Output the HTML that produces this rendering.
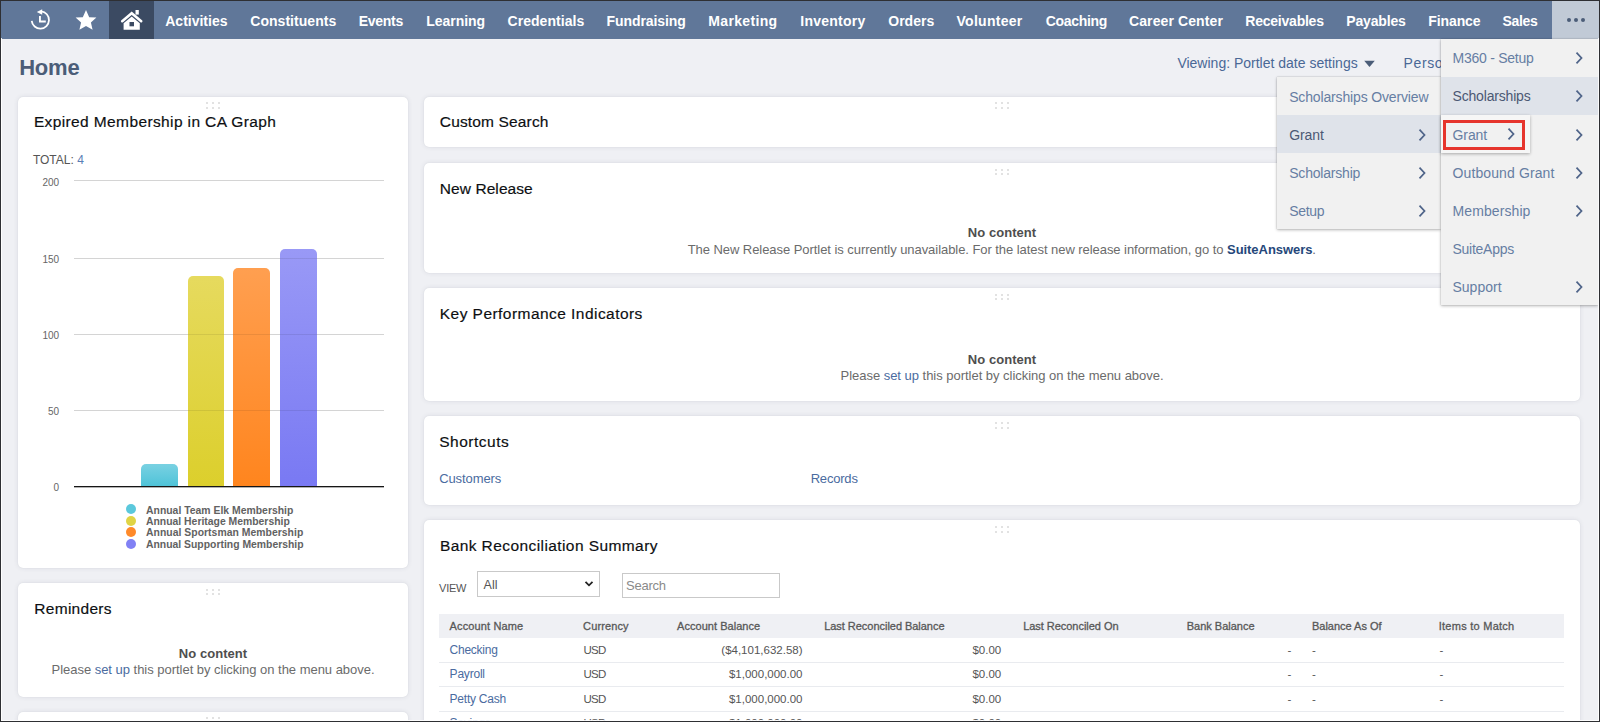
<!DOCTYPE html>
<html><head><meta charset="utf-8">
<style>
*{box-sizing:border-box}
html,body{margin:0;padding:0}
body{width:1600px;height:722px;overflow:hidden;position:relative;background:#eff0f4;font-family:"Liberation Sans",sans-serif}
.t{position:absolute;white-space:nowrap;line-height:1}
.tt{-webkit-text-stroke:0.18px currentColor}
.r{position:absolute}
.dot{position:absolute;width:2px;height:2px;background:#e2e2e2}
.pt{position:absolute;background:#fff;border-radius:5px;box-shadow:0 0 5px rgba(50,60,80,.10),0 0 1px rgba(50,60,80,.12)}
#frame{position:absolute;left:0;top:0;width:1600px;height:722px;border:1px solid #2e2f33;z-index:100;pointer-events:none}
#fr2{position:absolute;left:1px;top:38px;width:1598px;height:683px;border-left:1px solid rgba(255,255,255,.9);border-right:1px solid rgba(255,255,255,.9);border-bottom:1px solid rgba(255,255,255,.9);z-index:99;pointer-events:none}
.menu{position:absolute;background:#f1f1f1;box-shadow:0 1px 3px rgba(0,0,0,.28),0 0 1px rgba(0,0,0,.25)}
</style></head><body>

<div class="r" style="left:0.00px;top:0.00px;width:1600.00px;height:38.50px;background:#607799"></div>
<svg class="r" style="left:25px;top:5px" width="32" height="32" viewBox="25 5 32 32">
<path d="M31.72 20.9 A8.65 8.65 0 1 0 41.2 11.35" fill="none" stroke="#fff" stroke-width="1.8"/>
<path d="M36.8 12.0 L42.2 9.3 L42.2 14.7 Z" fill="#fff"/>
<path d="M39.95 16.0 L39.95 21.5 L45.8 21.5" fill="none" stroke="#fff" stroke-width="1.9"/>
</svg>
<svg class="r" style="left:70px;top:5px" width="32" height="30" viewBox="70 5 32 30">
<path d="M86 10 L89.2 17.2 L96.4 17.6 L90.9 22.6 L92.6 29.8 L86 25.9 L79.4 29.8 L81.1 22.6 L75.6 17.6 L82.8 17.2 Z" fill="#fff"/>
</svg>
<div class="r" style="left:108.50px;top:0.00px;width:45.50px;height:38.50px;background:#3b4a62"></div>
<svg class="r" style="left:115px;top:5px" width="34" height="30" viewBox="115 5 34 30">
<path d="M123.6 23.2 L131.7 16.4 L139.8 23.2 L139.8 29.8 L123.6 29.8 Z" fill="#fff"/>
<rect x="129.5" y="22" width="4.5" height="4.3" fill="#3b4a62"/>
<path d="M122.2 21.2 L131.7 13.3 L141.2 21.2" fill="none" stroke="#fff" stroke-width="2.6" stroke-linecap="round" stroke-linejoin="miter"/>
<rect x="135.5" y="10" width="3.3" height="4.6" fill="#fff"/>
</svg>
<div class="t" style="left:165.25px;top:13.80px;font-size:14px;color:#fff;font-weight:bold;">Activities</div>
<div class="t" style="left:250.25px;top:13.80px;font-size:14px;color:#fff;font-weight:bold;letter-spacing:0.038px;">Constituents</div>
<div class="t" style="left:358.75px;top:13.80px;font-size:14px;color:#fff;font-weight:bold;letter-spacing:-0.276px;">Events</div>
<div class="t" style="left:426.25px;top:13.80px;font-size:14px;color:#fff;font-weight:bold;letter-spacing:-0.045px;">Learning</div>
<div class="t" style="left:507.50px;top:13.80px;font-size:14px;color:#fff;font-weight:bold;letter-spacing:0.046px;">Credentials</div>
<div class="t" style="left:606.50px;top:13.80px;font-size:14px;color:#fff;font-weight:bold;letter-spacing:-0.078px;">Fundraising</div>
<div class="t" style="left:708.25px;top:13.80px;font-size:14px;color:#fff;font-weight:bold;letter-spacing:0.348px;">Marketing</div>
<div class="t" style="left:800.25px;top:13.80px;font-size:14px;color:#fff;font-weight:bold;letter-spacing:0.249px;">Inventory</div>
<div class="t" style="left:888.25px;top:13.80px;font-size:14px;color:#fff;font-weight:bold;letter-spacing:0.015px;">Orders</div>
<div class="t" style="left:956.50px;top:13.80px;font-size:14px;color:#fff;font-weight:bold;letter-spacing:0.275px;">Volunteer</div>
<div class="t" style="left:1045.75px;top:13.80px;font-size:14px;color:#fff;font-weight:bold;letter-spacing:-0.316px;">Coaching</div>
<div class="t" style="left:1129.00px;top:13.80px;font-size:14px;color:#fff;font-weight:bold;letter-spacing:0.108px;">Career Center</div>
<div class="t" style="left:1245.25px;top:13.80px;font-size:14px;color:#fff;font-weight:bold;letter-spacing:-0.222px;">Receivables</div>
<div class="t" style="left:1346.25px;top:13.80px;font-size:14px;color:#fff;font-weight:bold;letter-spacing:-0.151px;">Payables</div>
<div class="t" style="left:1428.25px;top:13.80px;font-size:14px;color:#fff;font-weight:bold;letter-spacing:-0.093px;">Finance</div>
<div class="t" style="left:1502.50px;top:13.80px;font-size:14px;color:#fff;font-weight:bold;letter-spacing:-0.317px;">Sales</div>
<div class="r" style="left:1552.00px;top:1.00px;width:47.00px;height:37.50px;background:#c1cad6"></div>
<i class="r" style="left:1567px;top:18px;width:4px;height:4px;border-radius:2px;background:#4b5d78"></i>
<i class="r" style="left:1574px;top:18px;width:4px;height:4px;border-radius:2px;background:#4b5d78"></i>
<i class="r" style="left:1580.5px;top:18px;width:4px;height:4px;border-radius:2px;background:#4b5d78"></i>
<div class="t" style="left:19.20px;top:56.90px;font-size:22px;color:#4b5d78;font-weight:bold;letter-spacing:-0.231px;">Home</div>
<div class="t" style="left:1177.40px;top:55.75px;font-size:14px;color:#4a6896;">Viewing: Portlet date settings</div>
<svg class="r" style="left:1363px;top:60px" width="13" height="8"><path d="M1.2 0.8 L11.8 0.8 L6.5 6.9 Z" fill="#4b5d78"/></svg>
<div class="t" style="left:1403.60px;top:55.75px;font-size:14px;color:#4a6896;letter-spacing:0.623px;">Personalize</div>
<div class="pt" style="left:18px;top:97px;width:390.4px;height:471px"></div>
<i class="dot" style="left:206.40px;top:102.30px"></i>
<i class="dot" style="left:206.40px;top:106.70px"></i>
<i class="dot" style="left:212.00px;top:102.30px"></i>
<i class="dot" style="left:212.00px;top:106.70px"></i>
<i class="dot" style="left:217.90px;top:102.30px"></i>
<i class="dot" style="left:217.90px;top:106.70px"></i>
<div class="t tt" style="left:33.90px;top:114.10px;font-size:15.5px;color:#0d0f12;letter-spacing:0.381px;">Expired Membership in CA Graph</div>
<div class="t" style="left:32.90px;top:154.10px;font-size:12px;color:#555;">TOTAL: </div>
<div class="t" style="left:77.13px;top:154.10px;font-size:12px;color:#5a7db5;">4</div>
<div class="r" style="left:74.00px;top:180.10px;width:310.00px;height:1.00px;background:#d4d4d4"></div>
<div class="t" style="left:42.42px;top:178.00px;font-size:10px;color:#666;">200</div>
<div class="r" style="left:74.00px;top:257.80px;width:310.00px;height:1.00px;background:#d4d4d4"></div>
<div class="t" style="left:42.42px;top:254.60px;font-size:10px;color:#666;">150</div>
<div class="r" style="left:74.00px;top:334.00px;width:310.00px;height:1.00px;background:#d4d4d4"></div>
<div class="t" style="left:42.42px;top:330.80px;font-size:10px;color:#666;">100</div>
<div class="r" style="left:74.00px;top:409.80px;width:310.00px;height:1.00px;background:#d4d4d4"></div>
<div class="t" style="left:47.98px;top:406.60px;font-size:10px;color:#666;">50</div>
<div class="t" style="left:53.54px;top:482.80px;font-size:10px;color:#666;">0</div>
<div class="r" style="left:141.00px;top:464.10px;width:36.90px;height:21.90px;background:linear-gradient(#79d1e2,#4fc3d8);border-radius:5px 5px 0 0"></div>
<div class="r" style="left:187.50px;top:275.60px;width:36.90px;height:210.40px;background:linear-gradient(#e6da5e,#dccf2c);border-radius:5px 5px 0 0"></div>
<div class="r" style="left:233.10px;top:268.10px;width:36.90px;height:217.90px;background:linear-gradient(#ff9f50,#ff851e);border-radius:5px 5px 0 0"></div>
<div class="r" style="left:280.00px;top:249.00px;width:37.10px;height:237.00px;background:linear-gradient(#9999f6,#7979f3);border-radius:5px 5px 0 0"></div>
<div class="r" style="left:74.00px;top:486.00px;width:310.00px;height:1.00px;background:#161616"></div>
<div class="r" style="left:74.00px;top:487.00px;width:310.00px;height:1.00px;background:rgba(0,0,0,.3)"></div>
<div class="r" style="left:280.00px;top:257.80px;width:37.10px;height:1.00px;background:rgba(0,0,0,.08)"></div>
<div class="r" style="left:187.50px;top:334.00px;width:36.90px;height:1.00px;background:rgba(0,0,0,.08)"></div>
<div class="r" style="left:233.10px;top:334.00px;width:36.90px;height:1.00px;background:rgba(0,0,0,.08)"></div>
<div class="r" style="left:280.00px;top:334.00px;width:37.10px;height:1.00px;background:rgba(0,0,0,.08)"></div>
<div class="r" style="left:187.50px;top:409.80px;width:36.90px;height:1.00px;background:rgba(0,0,0,.08)"></div>
<div class="r" style="left:233.10px;top:409.80px;width:36.90px;height:1.00px;background:rgba(0,0,0,.08)"></div>
<div class="r" style="left:280.00px;top:409.80px;width:37.10px;height:1.00px;background:rgba(0,0,0,.08)"></div>
<i class="r" style="left:126px;top:504.25px;width:10px;height:10px;border-radius:5px;background:#5bc8dc"></i>
<div class="t" style="left:146.00px;top:505.60px;font-size:10.4px;color:#626262;font-weight:bold;letter-spacing:0.013px;">Annual Team Elk Membership</div>
<i class="r" style="left:126px;top:515.70px;width:10px;height:10px;border-radius:5px;background:#e0d444"></i>
<div class="t" style="left:146.00px;top:516.90px;font-size:10.4px;color:#626262;font-weight:bold;">Annual Heritage Membership</div>
<i class="r" style="left:126px;top:527.15px;width:10px;height:10px;border-radius:5px;background:#ff8a2a"></i>
<div class="t" style="left:146.00px;top:528.20px;font-size:10.4px;color:#626262;font-weight:bold;letter-spacing:0.030px;">Annual Sportsman Membership</div>
<i class="r" style="left:126px;top:538.60px;width:10px;height:10px;border-radius:5px;background:#8181f4"></i>
<div class="t" style="left:146.00px;top:539.50px;font-size:10.4px;color:#626262;font-weight:bold;">Annual Supporting Membership</div>
<div class="pt" style="left:18px;top:583px;width:390.4px;height:113.5px"></div>
<i class="dot" style="left:206.40px;top:588.80px"></i>
<i class="dot" style="left:206.40px;top:593.20px"></i>
<i class="dot" style="left:212.00px;top:588.80px"></i>
<i class="dot" style="left:212.00px;top:593.20px"></i>
<i class="dot" style="left:217.90px;top:588.80px"></i>
<i class="dot" style="left:217.90px;top:593.20px"></i>
<div class="t tt" style="left:34.30px;top:600.80px;font-size:15.5px;color:#0d0f12;letter-spacing:0.285px;">Reminders</div>
<div class="t" style="left:178.85px;top:646.50px;font-size:13px;color:#4e4e4e;font-weight:bold;letter-spacing:0.042px;">No content</div>
<div class="t" style="left:51.50px;top:663.20px;font-size:13px;color:#6b6b6b;letter-spacing:-0.025px;">Please <span style="color:#4a6ba0">set up</span> this portlet by clicking on the menu above.</div>
<div class="pt" style="left:18px;top:712px;width:390.4px;height:48px"></div>
<i class="dot" style="left:206.40px;top:717.30px"></i>
<i class="dot" style="left:206.40px;top:721.70px"></i>
<i class="dot" style="left:212.00px;top:717.30px"></i>
<i class="dot" style="left:212.00px;top:721.70px"></i>
<i class="dot" style="left:217.90px;top:717.30px"></i>
<i class="dot" style="left:217.90px;top:721.70px"></i>
<div class="pt" style="left:423.6px;top:97px;width:1156.4px;height:50.19999999999999px"></div>
<i class="dot" style="left:995.40px;top:102.30px"></i>
<i class="dot" style="left:995.40px;top:106.70px"></i>
<i class="dot" style="left:1001.00px;top:102.30px"></i>
<i class="dot" style="left:1001.00px;top:106.70px"></i>
<i class="dot" style="left:1006.90px;top:102.30px"></i>
<i class="dot" style="left:1006.90px;top:106.70px"></i>
<div class="t tt" style="left:439.80px;top:114.40px;font-size:15.5px;color:#0d0f12;letter-spacing:0.153px;">Custom Search</div>
<div class="pt" style="left:423.6px;top:162.7px;width:1156.4px;height:109.90000000000003px"></div>
<i class="dot" style="left:995.40px;top:168.80px"></i>
<i class="dot" style="left:995.40px;top:173.20px"></i>
<i class="dot" style="left:1001.00px;top:168.80px"></i>
<i class="dot" style="left:1001.00px;top:173.20px"></i>
<i class="dot" style="left:1006.90px;top:168.80px"></i>
<i class="dot" style="left:1006.90px;top:173.20px"></i>
<div class="t tt" style="left:439.80px;top:180.80px;font-size:15.5px;color:#0d0f12;letter-spacing:0.075px;">New Release</div>
<div class="t" style="left:967.75px;top:225.90px;font-size:13px;color:#4e4e4e;font-weight:bold;letter-spacing:0.062px;">No content</div>
<div class="t" style="left:687.70px;top:242.75px;font-size:13px;color:#6b6b6b;letter-spacing:-0.057px;">The New Release Portlet is currently unavailable. For the latest new release information, go to <b style="color:#25477a">SuiteAnswers</b>.</div>
<div class="pt" style="left:423.6px;top:287.7px;width:1156.4px;height:113.30000000000001px"></div>
<i class="dot" style="left:995.40px;top:293.80px"></i>
<i class="dot" style="left:995.40px;top:298.20px"></i>
<i class="dot" style="left:1001.00px;top:293.80px"></i>
<i class="dot" style="left:1001.00px;top:298.20px"></i>
<i class="dot" style="left:1006.90px;top:293.80px"></i>
<i class="dot" style="left:1006.90px;top:298.20px"></i>
<div class="t tt" style="left:439.80px;top:306.00px;font-size:15.5px;color:#0d0f12;letter-spacing:0.452px;">Key Performance Indicators</div>
<div class="t" style="left:967.75px;top:352.70px;font-size:13px;color:#4e4e4e;font-weight:bold;letter-spacing:0.062px;">No content</div>
<div class="t" style="left:840.50px;top:369.20px;font-size:13px;color:#6b6b6b;letter-spacing:-0.025px;">Please <span style="color:#4a6ba0">set up</span> this portlet by clicking on the menu above.</div>
<div class="pt" style="left:423.6px;top:416px;width:1156.4px;height:89px"></div>
<i class="dot" style="left:995.40px;top:422.30px"></i>
<i class="dot" style="left:995.40px;top:426.70px"></i>
<i class="dot" style="left:1001.00px;top:422.30px"></i>
<i class="dot" style="left:1001.00px;top:426.70px"></i>
<i class="dot" style="left:1006.90px;top:422.30px"></i>
<i class="dot" style="left:1006.90px;top:426.70px"></i>
<div class="t tt" style="left:439.20px;top:434.10px;font-size:15.5px;color:#0d0f12;letter-spacing:0.503px;">Shortcuts</div>
<div class="t" style="left:439.20px;top:472.20px;font-size:13px;color:#4a6ba0;letter-spacing:-0.094px;">Customers</div>
<div class="t" style="left:810.70px;top:472.20px;font-size:13px;color:#4a6ba0;letter-spacing:-0.201px;">Records</div>
<div class="pt" style="left:423.6px;top:520.2px;width:1156.4px;height:279.79999999999995px"></div>
<i class="dot" style="left:995.40px;top:526.30px"></i>
<i class="dot" style="left:995.40px;top:530.70px"></i>
<i class="dot" style="left:1001.00px;top:526.30px"></i>
<i class="dot" style="left:1001.00px;top:530.70px"></i>
<i class="dot" style="left:1006.90px;top:526.30px"></i>
<i class="dot" style="left:1006.90px;top:530.70px"></i>
<div class="t tt" style="left:439.90px;top:538.40px;font-size:15.5px;color:#0d0f12;letter-spacing:0.417px;">Bank Reconciliation Summary</div>
<div class="t" style="left:439.10px;top:582.70px;font-size:11px;color:#555;letter-spacing:-0.278px;">VIEW</div>
<div class="r" style="left:476.50px;top:571.40px;width:123.30px;height:25.90px;background:#fff;border:1px solid #c9c9c9"></div>
<div class="t" style="left:483.60px;top:579.00px;font-size:12.5px;color:#555;">All</div>
<svg class="r" style="left:584px;top:580px" width="10" height="8"><path d="M1.5 1.8 L5 5.3 L8.5 1.8" fill="none" stroke="#222" stroke-width="1.8"/></svg>
<div class="r" style="left:622.20px;top:573.30px;width:158.20px;height:24.30px;background:#fff;border:1px solid #c9c9c9"></div>
<div class="t" style="left:626.00px;top:579.00px;font-size:13px;color:#8a8a8a;letter-spacing:-0.248px;">Search</div>
<div class="r" style="left:439.10px;top:613.90px;width:1125.20px;height:24.00px;background:#eff0f4"></div>
<div class="t" style="left:449.60px;top:621.20px;font-size:11px;color:#585858;letter-spacing:0.130px;-webkit-text-stroke:0.3px currentColor;">Account Name</div>
<div class="t" style="left:583.10px;top:621.20px;font-size:11px;color:#585858;letter-spacing:0.110px;-webkit-text-stroke:0.3px currentColor;">Currency</div>
<div class="t" style="left:677.00px;top:621.20px;font-size:11px;color:#585858;letter-spacing:0.043px;-webkit-text-stroke:0.3px currentColor;">Account Balance</div>
<div class="t" style="left:824.20px;top:621.20px;font-size:11px;color:#585858;letter-spacing:-0.033px;-webkit-text-stroke:0.3px currentColor;">Last Reconciled Balance</div>
<div class="t" style="left:1023.20px;top:621.20px;font-size:11px;color:#585858;letter-spacing:-0.038px;-webkit-text-stroke:0.3px currentColor;">Last Reconciled On</div>
<div class="t" style="left:1186.70px;top:621.20px;font-size:11px;color:#585858;-webkit-text-stroke:0.3px currentColor;">Bank Balance</div>
<div class="t" style="left:1312.00px;top:621.20px;font-size:11px;color:#585858;letter-spacing:-0.016px;-webkit-text-stroke:0.3px currentColor;">Balance As Of</div>
<div class="t" style="left:1438.70px;top:621.20px;font-size:11px;color:#585858;letter-spacing:0.262px;-webkit-text-stroke:0.3px currentColor;">Items to Match</div>
<div class="r" style="left:439.10px;top:661.90px;width:1125.20px;height:1.00px;background:#e9ebef"></div>
<div class="r" style="left:439.10px;top:686.00px;width:1125.20px;height:1.00px;background:#e9ebef"></div>
<div class="r" style="left:439.10px;top:710.90px;width:1125.20px;height:1.00px;background:#e9ebef"></div>
<div class="t" style="left:449.60px;top:644.20px;font-size:12px;color:#4a6ba0;letter-spacing:-0.250px;">Checking</div>
<div class="t" style="left:583.50px;top:645.20px;font-size:11.5px;color:#555;letter-spacing:-0.694px;">USD</div>
<div class="t" style="left:721.31px;top:645.20px;font-size:11.5px;color:#555;">($4,101,632.58)</div>
<div class="t" style="left:972.42px;top:645.20px;font-size:11.5px;color:#555;">$0.00</div>
<div class="t" style="left:1287.50px;top:645.20px;font-size:11.5px;color:#555;">-</div>
<div class="t" style="left:1312.00px;top:645.20px;font-size:11.5px;color:#555;">-</div>
<div class="t" style="left:1439.50px;top:645.20px;font-size:11.5px;color:#555;">-</div>
<div class="t" style="left:449.60px;top:668.40px;font-size:12px;color:#4a6ba0;letter-spacing:-0.210px;">Payroll</div>
<div class="t" style="left:583.50px;top:669.40px;font-size:11.5px;color:#555;letter-spacing:-0.694px;">USD</div>
<div class="t" style="left:728.96px;top:669.40px;font-size:11.5px;color:#555;">$1,000,000.00</div>
<div class="t" style="left:972.42px;top:669.40px;font-size:11.5px;color:#555;">$0.00</div>
<div class="t" style="left:1287.50px;top:669.40px;font-size:11.5px;color:#555;">-</div>
<div class="t" style="left:1312.00px;top:669.40px;font-size:11.5px;color:#555;">-</div>
<div class="t" style="left:1439.50px;top:669.40px;font-size:11.5px;color:#555;">-</div>
<div class="t" style="left:449.60px;top:692.80px;font-size:12px;color:#4a6ba0;letter-spacing:-0.235px;">Petty Cash</div>
<div class="t" style="left:583.50px;top:693.80px;font-size:11.5px;color:#555;letter-spacing:-0.694px;">USD</div>
<div class="t" style="left:728.96px;top:693.80px;font-size:11.5px;color:#555;">$1,000,000.00</div>
<div class="t" style="left:972.42px;top:693.80px;font-size:11.5px;color:#555;">$0.00</div>
<div class="t" style="left:1287.50px;top:693.80px;font-size:11.5px;color:#555;">-</div>
<div class="t" style="left:1312.00px;top:693.80px;font-size:11.5px;color:#555;">-</div>
<div class="t" style="left:1439.50px;top:693.80px;font-size:11.5px;color:#555;">-</div>
<div class="t" style="left:449.60px;top:717.20px;font-size:12px;color:#4a6ba0;letter-spacing:-0.244px;">Savings</div>
<div class="t" style="left:583.50px;top:718.20px;font-size:11.5px;color:#555;letter-spacing:-0.694px;">USD</div>
<div class="t" style="left:728.96px;top:718.20px;font-size:11.5px;color:#555;">$1,000,000.00</div>
<div class="t" style="left:972.42px;top:718.20px;font-size:11.5px;color:#555;">$0.00</div>
<div class="t" style="left:1287.50px;top:718.20px;font-size:11.5px;color:#555;">-</div>
<div class="t" style="left:1312.00px;top:718.20px;font-size:11.5px;color:#555;">-</div>
<div class="t" style="left:1439.50px;top:718.20px;font-size:11.5px;color:#555;">-</div>
<div class="menu" style="left:1276.6px;top:76.6px;width:164.1px;height:152.9px"></div>
<div class="r" style="left:1276.60px;top:115.00px;width:164.10px;height:38.00px;background:#dfe3ea"></div>
<div class="t" style="left:1289.20px;top:89.60px;font-size:14px;color:#667ea3;letter-spacing:-0.151px;">Scholarships Overview</div>
<div class="t" style="left:1289.20px;top:127.70px;font-size:14px;color:#4b5874;letter-spacing:-0.082px;">Grant</div>
<svg class="r" style="left:1415.60px;top:126.70px" width="12" height="16" viewBox="0 0 12 16"><path d="M3.50 2.70 L8.50 8 L3.50 13.30" fill="none" stroke="#4f6489" stroke-width="1.75"/></svg>
<div class="t" style="left:1289.20px;top:165.80px;font-size:14px;color:#667ea3;letter-spacing:-0.195px;">Scholarship</div>
<svg class="r" style="left:1415.60px;top:164.80px" width="12" height="16" viewBox="0 0 12 16"><path d="M3.50 2.70 L8.50 8 L3.50 13.30" fill="none" stroke="#4f6489" stroke-width="1.75"/></svg>
<div class="t" style="left:1289.20px;top:203.90px;font-size:14px;color:#667ea3;letter-spacing:-0.317px;">Setup</div>
<svg class="r" style="left:1415.60px;top:202.90px" width="12" height="16" viewBox="0 0 12 16"><path d="M3.50 2.70 L8.50 8 L3.50 13.30" fill="none" stroke="#4f6489" stroke-width="1.75"/></svg>
<div class="menu" style="left:1441px;top:39px;width:156.5px;height:266px"></div>
<div class="r" style="left:1441.00px;top:77.00px;width:156.50px;height:38.00px;background:#dfe3ea"></div>
<div class="t" style="left:1452.50px;top:51.20px;font-size:14px;color:#667ea3;letter-spacing:-0.253px;">M360 - Setup</div>
<svg class="r" style="left:1573.10px;top:50.30px" width="12" height="16" viewBox="0 0 12 16"><path d="M3.50 2.70 L8.50 8 L3.50 13.30" fill="none" stroke="#4f6489" stroke-width="1.75"/></svg>
<div class="t" style="left:1452.50px;top:89.33px;font-size:14px;color:#4b5874;letter-spacing:-0.179px;">Scholarships</div>
<svg class="r" style="left:1573.10px;top:88.43px" width="12" height="16" viewBox="0 0 12 16"><path d="M3.50 2.70 L8.50 8 L3.50 13.30" fill="none" stroke="#4f6489" stroke-width="1.75"/></svg>
<div class="t" style="left:1452.50px;top:127.46px;font-size:14px;color:#667ea3;letter-spacing:-0.082px;">Grant</div>
<svg class="r" style="left:1573.10px;top:126.56px" width="12" height="16" viewBox="0 0 12 16"><path d="M3.50 2.70 L8.50 8 L3.50 13.30" fill="none" stroke="#4f6489" stroke-width="1.75"/></svg>
<div class="t" style="left:1452.50px;top:165.59px;font-size:14px;color:#667ea3;letter-spacing:0.115px;">Outbound Grant</div>
<svg class="r" style="left:1573.10px;top:164.69px" width="12" height="16" viewBox="0 0 12 16"><path d="M3.50 2.70 L8.50 8 L3.50 13.30" fill="none" stroke="#4f6489" stroke-width="1.75"/></svg>
<div class="t" style="left:1452.50px;top:203.72px;font-size:14px;color:#667ea3;letter-spacing:0.098px;">Membership</div>
<svg class="r" style="left:1573.10px;top:202.82px" width="12" height="16" viewBox="0 0 12 16"><path d="M3.50 2.70 L8.50 8 L3.50 13.30" fill="none" stroke="#4f6489" stroke-width="1.75"/></svg>
<div class="t" style="left:1452.50px;top:241.85px;font-size:14px;color:#667ea3;letter-spacing:-0.258px;">SuiteApps</div>
<div class="t" style="left:1452.50px;top:279.98px;font-size:14px;color:#667ea3;">Support</div>
<svg class="r" style="left:1573.10px;top:279.08px" width="12" height="16" viewBox="0 0 12 16"><path d="M3.50 2.70 L8.50 8 L3.50 13.30" fill="none" stroke="#4f6489" stroke-width="1.75"/></svg>
<div class="r" style="left:1440.7px;top:115px;width:89.3px;height:38px;background:#f6f6f6;box-shadow:0 1px 3px rgba(0,0,0,.3)"></div>
<div class="r" style="left:1442.90px;top:119.50px;width:82.50px;height:30.80px;border:3px solid #e6352d;background:#f1f1f1"></div>
<div class="t" style="left:1452.50px;top:128.00px;font-size:14px;color:#667ea3;letter-spacing:-0.082px;">Grant</div>
<svg class="r" style="left:1504.80px;top:126.40px" width="12" height="16" viewBox="0 0 12 16"><path d="M3.50 2.70 L8.50 8 L3.50 13.30" fill="none" stroke="#4f6489" stroke-width="1.75"/></svg>
<div id="fr2"></div><div id="frame"></div>
</body></html>
